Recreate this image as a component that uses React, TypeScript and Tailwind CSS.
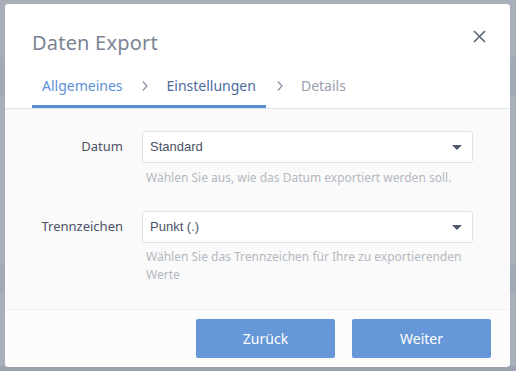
import React from "react";

function Chevron({ className = "mx-[19px]" }: { className?: string }) {
  return (
    <svg width="6" height="12" viewBox="0 0 6 12" className={className}>
      <path d="M0.8 1.5 L5 6 L0.8 10.5" fill="none" stroke="#8a94a6" strokeWidth="1.3" />
    </svg>
  );
}

function Select({ value }: { value: string }) {
  return (
    <div className="h-[32px] w-[331px] rounded-[3px] border border-[#dde2ea] bg-white flex items-center justify-between pl-[7px] pr-[10px]">
      <span className="text-[13px] text-[#4a5366]" style={{ fontFamily: '"Liberation Sans", Arial, sans-serif' }}>
        {value}
      </span>
      <svg width="10" height="5" viewBox="0 0 10 5">
        <path d="M0 0 L10 0 L5 5 Z" fill="#4f5a70" />
      </svg>
    </div>
  );
}

export default function App() {
  return (
    <div
      className="w-[516px] h-[371px] bg-[#a8afbb] overflow-hidden relative"
      style={{ fontFamily: '"Noto Sans", "Open Sans", sans-serif' }}
    >
      <div className="absolute left-0 top-[57px] w-full h-[39px] bg-[#a2a9b6]" />
      <div className="absolute left-0 top-[265px] w-full h-[28px] bg-[#a2a9b6]" />
      <div className="absolute left-0 top-[366px] w-full h-[5px] bg-[#9ba3b0]" />
      <div className="relative ml-[5px] mt-[4px] w-[505px] h-[363px] rounded-[4px] bg-white flex flex-col overflow-hidden">
        {/* Header */}
        <div className="bg-white border-b border-[#dfe3ea]">
          <div className="flex items-center justify-between pl-[27px] pr-[24px] pt-[24px] h-[54px]">
            <span className="text-[20px] leading-[28px] text-[#7a8393] tracking-[0.2px]">Daten Export</span>
            <svg width="13" height="13" viewBox="0 0 13 13" className="mt-[-14px]">
              <path d="M1 1 L12 12 M12 1 L1 12" stroke="#5a6478" strokeWidth="1.6" />
            </svg>
          </div>
          <div className="flex items-end pl-[27px] pt-[18px]">
            <div className="flex items-center border-b-[3px] border-[#5b8fd6] pb-[9px] px-[10px]">
              <span className="text-[14px] leading-[20px] text-[#5b8fd6]">Allgemeines</span>
              <Chevron />
              <span className="text-[14px] leading-[20px] text-[#4a6b9c]">Einstellungen</span>
            </div>
            <div className="flex items-center pb-[12px] pr-[10px]">
              <Chevron className="ml-[11px] mr-[18px]" />
              <span className="text-[14px] leading-[20px] text-[#98a0ad]">Details</span>
            </div>
          </div>
        </div>
        {/* Body */}
        <div className="flex-1 bg-[#fafafa] pt-[22px]">
          <div className="grid grid-cols-[118px_331px] gap-x-[19px]">
            <div className="h-[32px] flex items-center justify-end text-[13px] text-[#4a5366]">Datum</div>
            <Select value="Standard" />
            <div />
            <div className="pl-[4px] pt-[6px] text-[12px] leading-[18px] text-[#b3b8c2]">
              Wählen Sie aus, wie das Datum exportiert werden soll.
            </div>
            <div className="h-[32px] mt-[24px] flex items-center justify-end text-[13px] text-[#4a5366]">Trennzeichen</div>
            <div className="mt-[24px]">
              <Select value="Punkt (.)" />
            </div>
            <div />
            <div className="pl-[4px] pt-[5px] pr-[10px] text-[12px] leading-[18px] text-[#b3b8c2]">
              Wählen Sie das Trennzeichen für Ihre zu exportierenden Werte
            </div>
          </div>
        </div>
        {/* Footer */}
        <div className="h-[58px] border-t border-[#eceef1] bg-[#fcfcfc] flex justify-end items-start pt-[9px] pr-[19px] gap-[17px]">
          <button className="w-[139px] h-[39px] rounded-[2px] bg-[#6597d9] text-white text-[14px]">Zurück</button>
          <button className="w-[139px] h-[39px] rounded-[2px] bg-[#6597d9] text-white text-[14px]">Weiter</button>
        </div>
      </div>
    </div>
  );
}
